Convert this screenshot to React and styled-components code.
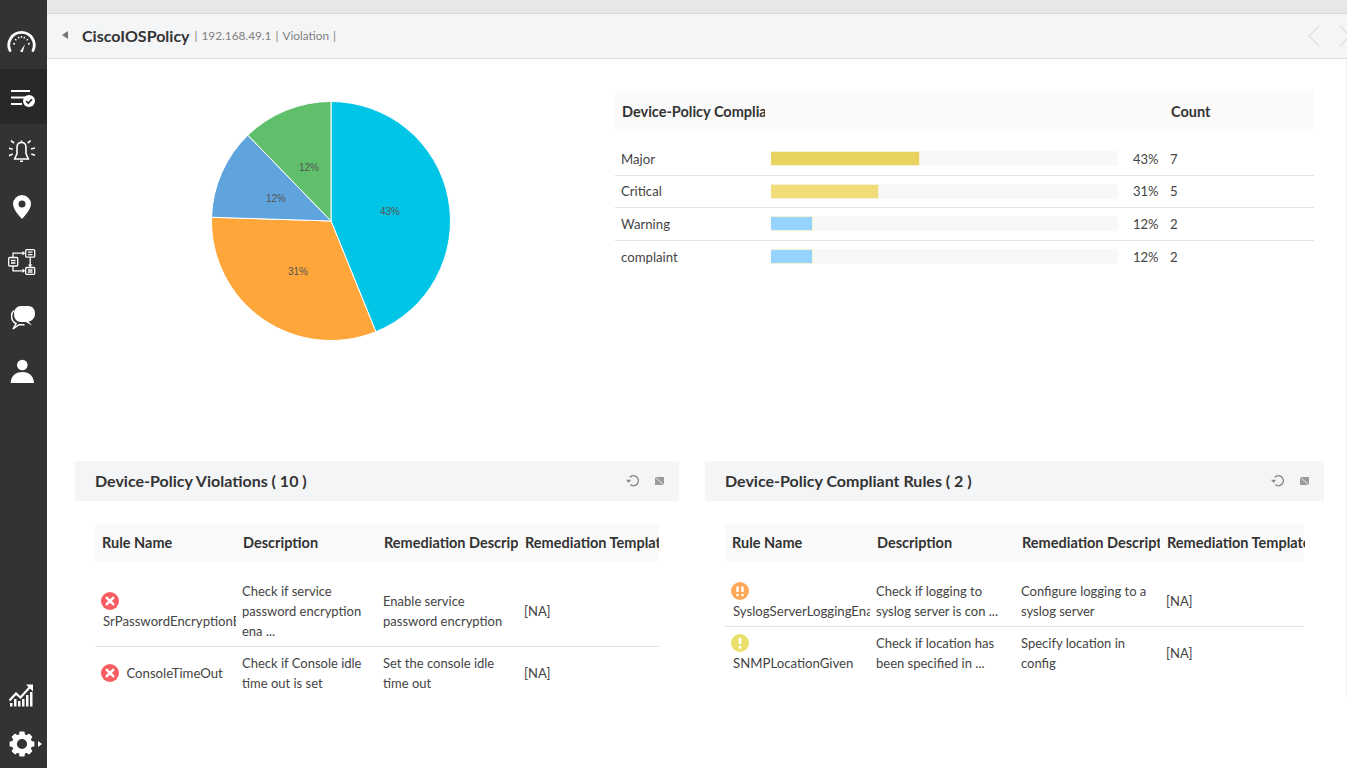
import React from "react";
import styled, { createGlobalStyle } from "styled-components";

const GlobalStyle = createGlobalStyle`
  html, body {
    margin: 0;
    padding: 0;
    background: #fff;
    overflow: hidden;
  }
  * {
    box-sizing: border-box;
  }
`;

const severityRows = [
  { label: "Major", value: 43, count: 7, color: "#e8d260" },
  { label: "Critical", value: 31, count: 5, color: "#f0dc78" },
  { label: "Warning", value: 12, count: 2, color: "#96d4ff" },
  { label: "complaint", value: 12, count: 2, color: "#96d4ff" },
];

const pieSlices = [
  { from: 0, to: 157.96, color: "#00c5e6" },
  { from: 157.96, to: 271.8, color: "#ffa63a" },
  { from: 271.8, to: 315.9, color: "#5fa4dc" },
  { from: 315.9, to: 360, color: "#5fbf6a" },
];

const pieLabels = [
  { x: 179, y: 114, text: "43%" },
  { x: 87, y: 174, text: "31%" },
  { x: 65, y: 101, text: "12%" },
  { x: 98, y: 70, text: "12%" },
];

const violationRows = [
  {
    level: "error",
    name: "SrPasswordEncryptionEnabled",
    description: "Check if service password encryption ena ...",
    remediation: "Enable service password encryption",
  },
  {
    level: "error",
    name: "ConsoleTimeOut",
    description: "Check if Console idle time out is set",
    remediation: "Set the console idle time out",
  },
];

const compliantRows = [
  {
    level: "major",
    name: "SyslogServerLoggingEnabled",
    description: "Check if logging to syslog server is con ...",
    remediation: "Configure logging to a syslog server",
  },
  {
    level: "warning",
    name: "SNMPLocationGiven",
    description: "Check if location has been specified in  ...",
    remediation: "Specify location in config",
  },
];

const polar = (deg) => {
  const rad = ((deg - 90) * Math.PI) / 180;
  return [120 + 119.5 * Math.cos(rad), 120 + 119.5 * Math.sin(rad)];
};

const slicePath = ({ from, to }) => {
  const [x1, y1] = polar(from);
  const [x2, y2] = polar(to);
  return `M120 120 L${x1} ${y1} A119.5 119.5 0 ${to - from > 180 ? 1 : 0} 1 ${x2} ${y2} Z`;
};

const GaugeIcon = () => (
  <svg width="30" height="30" viewBox="0 0 30 30" fill="none" stroke="#fff">
    <path d="M3 23.500 A12.700 12.700 0 1 1 26 23.500" strokeWidth="2.800" strokeLinecap="round" />
    <path d="M6.200 16.500l1.800.5M8 12.200l1.500 1.100M11.400 9.700l.7 1.700M14.500 9v1.800M17.600 9.700l-.7 1.700M21 12.200l-1.500 1.100M22.800 16.500l-1.800.5" strokeWidth="1.300" />
    <path d="M13 24.500L18 17.300l-2.300 8z" fill="#fff" stroke="none" />
  </svg>
);

const ChecklistIcon = () => (
  <svg width="30" height="30" viewBox="0 0 30 30" fill="none">
    <path d="M4 9h19M4 15.500h15M4 22h11" stroke="#fff" strokeWidth="2" />
    <circle cx="22" cy="19" r="6" fill="#fff" />
    <path d="M19.200 19l2.100 2.200 3.600-4" stroke="#282828" strokeWidth="1.700" />
  </svg>
);

const BellIcon = () => (
  <svg width="30" height="30" viewBox="0 0 30 30" fill="none" stroke="#fff">
    <path d="M14.500 5.500c-3 0-4.500 2.200-4.500 5v6l-2.300 5.500h13.600L19 16.500v-6c0-2.800-1.500-5-4.500-5z" strokeWidth="1.600" />
    <path d="M14.500 3.500v2M13 24.300h3" strokeWidth="1.600" />
    <path d="M4 3.700L7 6M2 11.300l3.700 1M2 18.700L5.700 17M23.700 3.700L20.700 6M28 11l-4 1M28 18.300L24.300 17" strokeWidth="1.600" />
  </svg>
);

const PinIcon = () => (
  <svg width="30" height="30" viewBox="0 0 30 30">
    <path
      fill="#fff"
      fillRule="evenodd"
      d="M15 3a9 9 0 0 1 9 9c0 6-9 15-9 15s-9-9-9-15a9 9 0 0 1 9-9zm0 5.500a3.500 3.500 0 1 0 0 7 3.500 3.500 0 0 0 0-7z"
    />
  </svg>
);

const WorkflowIcon = () => (
  <svg width="30" height="30" viewBox="0 0 30 30" fill="none" stroke="#fff" strokeWidth="1.300">
    <rect x="1.700" y="10.500" width="9" height="8.500" rx="1" />
    <rect x="18.700" y="2.700" width="9" height="7.500" rx="1" />
    <rect x="18.700" y="20.500" width="9" height="6.800" rx="1" />
    <path d="M4 13.500h4.500M4 16h4.500M21 5.200h4.500M21 7.700h4.500M21 23h4.500M21 25h4.500" />
    <path d="M6 10.500V6.200h10.500M6 19v4.800h10.500M23.200 10.200v8.500" />
    <path d="M15.500 4l2.800 2.200-2.800 2.200zM15.500 21.600l2.800 2.200-2.800 2.200zM21 17.500h4.400l-2.200 2.800z" fill="#fff" stroke="none" />
  </svg>
);

const ChatIcon = () => (
  <svg width="30" height="30" viewBox="0 0 30 30">
    <path
      fill="none"
      stroke="#fff"
      strokeWidth="1.400"
      d="M7 8.500C5 10 4.600 12 4.600 14c0 4 2 6.500 4.500 7.500L6 27l6-4.200h5.500"
    />
    <path
      fill="#fff"
      d="M14 4h7c4 0 7 2.700 7 7.500S25 19 21.500 19.500L25 23.500l-6.200-3.500H14c-4 0-7-3-7-8s3-8 7-8z"
    />
  </svg>
);

const UserIcon = () => (
  <svg width="30" height="30" viewBox="0 0 30 30" fill="#fff">
    <circle cx="15.300" cy="8" r="5.300" />
    <path d="M3.700 26c0-6.500 4.500-11 11.600-11s11.600 4.500 11.600 11z" />
  </svg>
);

const GrowthIcon = () => (
  <svg width="30" height="30" viewBox="0 0 30 30" fill="#fff">
    <rect x="3" y="22" width="2.500" height="3.500" />
    <rect x="7" y="18" width="2.500" height="7.500" />
    <rect x="11" y="20" width="2.500" height="5.500" />
    <rect x="15" y="18" width="2.500" height="7.500" />
    <rect x="19" y="14" width="2.500" height="11.500" />
    <rect x="23" y="11" width="2.500" height="14.500" />
    <path d="M2.500 19.500L9 12.500l4.500 4 9-10" fill="none" stroke="#fff" strokeWidth="2.200" />
    <path d="M19 3.500h7v7z" />
  </svg>
);

const GearIcon = () => (
  <svg width="30" height="30" viewBox="0 0 30 30" fill="#fff">
    <circle cx="15" cy="15" r="7.600" fill="none" stroke="#fff" strokeWidth="5" />
    {[0, 45, 90, 135, 180, 225, 270, 315].map((deg) => (
      <rect key={deg} x="12.200" y="2.600" width="5.600" height="6" rx="1.200" transform={`rotate(${deg} 15 15)`} />
    ))}
  </svg>
);

const RefreshIcon = () => (
  <svg width="14" height="14" viewBox="0 0 14 14" fill="none">
    <path d="M3.800 3.200A5 5 0 1 1 4.400 10.700" stroke="#8a8a8a" strokeWidth="1.500" />
    <path d="M0 5.800h5.200L2.600 9z" fill="#8a8a8a" />
  </svg>
);

const ExpandIcon = () => (
  <svg width="9" height="8" viewBox="0 0 9 8">
    <rect width="9" height="8" fill="#9b9b9b" />
    <path d="M0 0L9 8" stroke="#e4e5e7" strokeWidth="1" />
  </svg>
);

const LevelIcon = ({ level }) => {
  if (level === "error") {
    return (
      <StatusSvg viewBox="0 0 18 18">
        <circle cx="9" cy="9" r="9" fill="#f85d62" />
        <path d="M5.800 5.800l6.400 6.400M12.200 5.800l-6.400 6.400" stroke="#fff" strokeWidth="2.600" strokeLinecap="round" />
      </StatusSvg>
    );
  }
  if (level === "major") {
    return (
      <StatusSvg viewBox="0 0 18 18">
        <circle cx="9" cy="9" r="9" fill="#ffa858" />
        <path d="M6.500 4.500v5.500M11.500 4.500v5.500" stroke="#fff" strokeWidth="2.400" />
        <circle cx="6.500" cy="13" r="1.300" fill="#fff" />
        <circle cx="11.500" cy="13" r="1.300" fill="#fff" />
      </StatusSvg>
    );
  }
  return (
    <StatusSvg viewBox="0 0 18 18">
      <circle cx="9" cy="9" r="9" fill="#e9df6a" />
      <path d="M9 3.800v6.400" stroke="#fff" strokeWidth="2.800" />
      <circle cx="9" cy="13.300" r="1.500" fill="#fff" />
    </StatusSvg>
  );
};

const RuleTable = ({ rows, columnWidth }) => (
  <TableWrap>
    <RuleHead $col={columnWidth}>
      <HeadCell>Rule Name</HeadCell>
      <HeadCell>Description</HeadCell>
      <HeadCell>Remediation Description</HeadCell>
      <HeadCell>Remediation Template</HeadCell>
    </RuleHead>
    <RuleBody>
      {rows.map((row) => (
        <RuleRow key={row.name} $col={columnWidth}>
          <NameCell>
            <LevelIcon level={row.level} /> {row.name}
          </NameCell>
          <TextCell>{row.description}</TextCell>
          <TextCell>{row.remediation}</TextCell>
          <TextCell>[NA]</TextCell>
        </RuleRow>
      ))}
    </RuleBody>
  </TableWrap>
);

const Panel = ({ title, width, rows, columnWidth }) => (
  <PanelBox $width={width}>
    <PanelHeader>
      <PanelTitle>{title}</PanelTitle>
      <PanelActions>
        <RefreshIcon />
        <ExpandIcon />
      </PanelActions>
    </PanelHeader>
    <RuleTable rows={rows} columnWidth={columnWidth} />
  </PanelBox>
);

export default function App() {
  return (
    <>
      <GlobalStyle />
      <Page>
        <Sidebar>
          <NavGroup>
            <NavItem><GaugeIcon /></NavItem>
            <NavItem $active><ChecklistIcon /></NavItem>
            <NavItem><BellIcon /></NavItem>
            <NavItem><PinIcon /></NavItem>
            <NavItem><WorkflowIcon /></NavItem>
            <NavItem><ChatIcon /></NavItem>
            <NavItem><UserIcon /></NavItem>
          </NavGroup>
          <BottomGroup>
            <BottomItem><GrowthIcon /></BottomItem>
            <BottomItem>
              <GearIcon />
              <GearCaret />
            </BottomItem>
          </BottomGroup>
        </Sidebar>
        <Main>
          <TopStrip />
          <Header>
            <BackCaret />
            <Title>CiscoIOSPolicy</Title>
            <Crumb>|</Crumb>
            <Crumb>192.168.49.1</Crumb>
            <Crumb>|</Crumb>
            <Crumb>Violation</Crumb>
            <Crumb>|</Crumb>
            <Pager>
              <svg width="46" height="22" viewBox="0 0 46 22" fill="none" stroke="#dcdddf" strokeWidth="1.200">
                <path d="M11 1L1 11l10 10" />
                <path d="M32 1l10 10-10 10" />
              </svg>
            </Pager>
          </Header>
          <Content>
            <SummaryRow>
              <PieColumn>
                <svg width="240" height="240" viewBox="0 0 240 240">
                  {pieSlices.map((slice) => (
                    <path key={slice.from} d={slicePath(slice)} fill={slice.color} stroke="#fff" strokeWidth="1" />
                  ))}
                  {pieLabels.map((label) => (
                    <text
                      key={label.x}
                      x={label.x}
                      y={label.y}
                      fontFamily="Liberation Sans, sans-serif"
                      fontSize="10"
                      fill="#555"
                      textAnchor="middle"
                    >
                      {label.text}
                    </text>
                  ))}
                </svg>
              </PieColumn>
              <SeverityTable>
                <SeverityHead>
                  <SeverityTitle>Device-Policy Compliance</SeverityTitle>
                  <span />
                  <HeadText>Count</HeadText>
                </SeverityHead>
                <SeverityBody>
                  {severityRows.map((row) => (
                    <SeverityRow key={row.label}>
                      <SeverityLabel>{row.label}</SeverityLabel>
                      <BarTrack>
                        <BarFill $color={row.color} style={{ width: `${row.value}%` }} />
                      </BarTrack>
                      <Percent>{row.value}%</Percent>
                      <CountCell>{row.count}</CountCell>
                    </SeverityRow>
                  ))}
                </SeverityBody>
              </SeverityTable>
            </SummaryRow>
            <PanelsRow>
              <Panel title="Device-Policy Violations ( 10 )" width={604} rows={violationRows} columnWidth={141} />
              <Panel title="Device-Policy Compliant Rules ( 2 )" width={619} rows={compliantRows} columnWidth={145} />
            </PanelsRow>
          </Content>
        </Main>
      </Page>
    </>
  );
}

const Page = styled.div`
  display: flex;
  width: 1366px;
  height: 768px;
  overflow: hidden;
  font-family: Lato, "Open Sans", sans-serif;
  font-size: 13.2px;
  color: #444;
`;

const Sidebar = styled.nav`
  display: flex;
  flex-direction: column;
  justify-content: space-between;
  flex: 0 0 47px;
  padding-top: 14px;
  background: #333;
`;

const NavGroup = styled.div`
  display: flex;
  flex-direction: column;
`;

const NavItem = styled.div`
  display: flex;
  align-items: center;
  height: 55px;
  padding-left: 7px;
  background: ${(p) => (p.$active ? "#282828" : "transparent")};
`;

const BottomGroup = styled.div`
  display: flex;
  flex-direction: column;
`;

const BottomItem = styled.div`
  display: flex;
  align-items: center;
  height: 48px;
  padding-left: 7px;
`;

const GearCaret = styled.span`
  margin-left: 1px;
  border-left: 4px solid #fff;
  border-top: 3px solid transparent;
  border-bottom: 3px solid transparent;
`;

const Main = styled.div`
  display: flex;
  flex-direction: column;
  flex: 0 0 1300px;
`;

const TopStrip = styled.div`
  height: 14px;
  background: #e6e7e8;
  border-bottom: 1px solid #d8d9da;
`;

const Header = styled.header`
  display: flex;
  align-items: center;
  gap: 4px;
  height: 45px;
  padding: 0 0 2px 15px;
  background: #f4f5f7;
  border-bottom: 1px solid #dcdde0;
  overflow: hidden;
`;

const BackCaret = styled.span`
  margin-right: 10px;
  border-right: 6px solid #777;
  border-top: 4px solid transparent;
  border-bottom: 4px solid transparent;
`;

const Title = styled.h1`
  margin: 0 1px 0 0;
  font-size: 16px;
  font-weight: 700;
  color: #333;
`;

const Crumb = styled.span`
  font-size: 11.8px;
  color: #808080;
`;

const Pager = styled.div`
  display: flex;
  margin: 2px -7px 0 auto;
`;

const Content = styled.main`
  flex: 0 0 638px;
  border-right: 1px solid #f1f1f1;
`;

const SummaryRow = styled.section`
  display: flex;
  height: 402px;
  padding-top: 32px;
`;

const PieColumn = styled.div`
  display: flex;
  justify-content: center;
  flex: 0 0 568px;
  padding-top: 10px;
`;

const SeverityTable = styled.div`
  width: 699px;
`;

const SeverityHead = styled.div`
  display: grid;
  grid-template-columns: 150px 406px 1fr;
  align-items: center;
  height: 40px;
  background: #fafafa;
`;

const HeadText = styled.span`
  font-size: 14.500px;
  font-weight: 700;
  color: #333;
`;

const SeverityTitle = styled(HeadText)`
  padding-left: 7px;
  white-space: nowrap;
  overflow: hidden;
`;

const SeverityBody = styled.div`
  margin-top: 12px;
`;

const SeverityRow = styled.div`
  display: grid;
  grid-template-columns: 156px 347px 52px 1fr;
  align-items: center;
  height: 32.500px;
  border-bottom: 1px solid #e2e2e2;
  &:last-child {
    border-bottom: 0;
  }
`;

const SeverityLabel = styled.span`
  padding-left: 6px;
`;

const BarTrack = styled.div`
  height: 15px;
  background: #f8f8f8;
`;

const BarFill = styled.div`
  height: 100%;
  background: ${(p) => p.$color};
  border: 1px solid #f6f1d4;
  border-left: 0;
`;

const Percent = styled.span`
  padding-left: 15px;
  font-size: 13px;
`;

const CountCell = styled.span``;

const PanelsRow = styled.section`
  display: flex;
  gap: 26px;
  padding-left: 28px;
`;

const PanelBox = styled.div`
  width: ${(p) => p.$width}px;
`;

const PanelHeader = styled.div`
  display: flex;
  align-items: center;
  justify-content: space-between;
  height: 40px;
  padding: 0 15px 0 20px;
  background: #f4f5f7;
`;

const PanelTitle = styled.h2`
  margin: 0 0 2px;
  font-size: 16px;
  font-weight: 700;
  color: #333;
`;

const PanelActions = styled.div`
  display: flex;
  align-items: center;
  gap: 15px;
`;

const TableWrap = styled.div`
  margin: 23px 20px 0;
`;

const RuleHead = styled.div`
  display: grid;
  grid-template-columns: repeat(4, ${(p) => p.$col}px);
  align-items: center;
  height: 38px;
  padding-bottom: 1px;
  background: #fafafa;
`;

const HeadCell = styled(HeadText)`
  padding-left: 7px;
  white-space: nowrap;
  overflow: hidden;
`;

const RuleBody = styled.div`
  margin-top: 13px;
`;

const RuleRow = styled.div`
  display: grid;
  grid-template-columns: repeat(4, ${(p) => p.$col}px);
  align-items: center;
  padding: 6px 0 5px;
  border-bottom: 1px solid #e2e2e2;
  &:last-child {
    border-bottom: 0;
  }
`;

const NameCell = styled.div`
  padding-left: 8px;
  line-height: 20px;
  overflow: hidden;
`;

const TextCell = styled.div`
  padding: 0 12px 0 6px;
  font-size: 13px;
  line-height: 20px;
`;

const StatusSvg = styled.svg`
  display: inline-block;
  vertical-align: -4px;
  width: 18px;
  height: 18px;
  margin-left: -2px;
  margin-right: 4px;
`;
